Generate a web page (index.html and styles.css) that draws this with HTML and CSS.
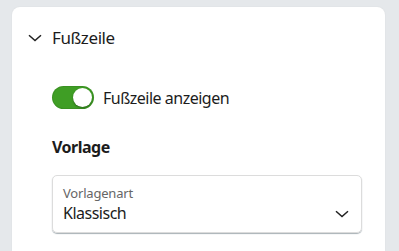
FILE: index.html
```html
<!DOCTYPE html>
<html lang="de">
<head>
<meta charset="utf-8">
<link rel="stylesheet" href="styles.css">
</head>
<body>
<div class="card">
  <div class="header">
    <svg class="chev" width="14" height="8" viewBox="0 0 14 8"><path d="M1 1.2 L7 6.6 L13 1.2" fill="none" stroke="#222" stroke-width="1.5"/></svg>
    <span class="title">Fußzeile</span>
  </div>
  <div class="content">
    <label class="toggle-row">
      <span class="toggle"><span class="knob"></span></span>
      <span class="toggle-label">Fußzeile anzeigen</span>
    </label>
    <div class="section-title">Vorlage</div>
    <div class="select">
      <div class="select-text">
        <span class="select-label">Vorlagenart</span>
        <span class="select-value">Klassisch</span>
      </div>
      <svg class="select-chev" width="14" height="8" viewBox="0 0 14 8"><path d="M1 1.2 L7 6.6 L13 1.2" fill="none" stroke="#222" stroke-width="1.5"/></svg>
    </div>
  </div>
</div>
</body>
</html>
```
FILE: styles.css
```css
html, body {
  margin: 0;
  padding: 0;
  background: #e5e8eb;
  font-family: "Noto Sans", "Open Sans", sans-serif;
  color: #1c1c1c;
  overflow: hidden;
  height: 251px;
}
.card {
  margin: 7px 0 0 12px;
  width: 373px;
  height: 244px;
  background: #fff;
  border-radius: 8px 8px 0 0;
  box-shadow: 0 0 2px rgba(0,0,0,0.06);
}
.header {
  display: flex;
  align-items: center;
  height: 20px;
  padding: 21px 0 0 16px;
  gap: 10px;
}
.chev {
  display: block;
}
.title {
  font-size: 17px;
  letter-spacing: -0.4px;
  line-height: 20px;
}
.content {
  padding: 0 0 0 40px;
}
.toggle-row {
  display: flex;
  align-items: center;
  gap: 9px;
  margin-top: 38px;
  height: 23px;
}
.toggle {
  position: relative;
  width: 42px;
  height: 23px;
  border-radius: 12px;
  background: #3f9e25;
  box-shadow: inset 0 0 0 1px rgba(0,0,0,0.08);
}
.knob {
  position: absolute;
  right: 2px;
  top: 2px;
  width: 19px;
  height: 19px;
  border-radius: 50%;
  background: #fff;
  box-shadow: 0 1px 2px rgba(0,0,0,0.35);
}
.toggle-label {
  font-size: 16px;
  letter-spacing: -0.5px;
  line-height: 20px;
}
.section-title {
  font-size: 16px;
  letter-spacing: -0.5px;
  font-weight: 700;
  line-height: 20px;
  margin-top: 28px;
}
.select {
  margin-top: 18px;
  width: 310px;
  height: 58px;
  box-sizing: border-box;
  border: 1px solid #dcdcdc;
  border-radius: 5px;
  box-shadow: 0 1px 1px rgba(60,80,90,0.45);
  display: flex;
  align-items: flex-end;
  justify-content: space-between;
  padding: 0 12px 0 10px;
}
.select-text {
  display: flex;
  flex-direction: column;
  padding-bottom: 8px;
}
.select-label {
  font-size: 13px;
  letter-spacing: -0.2px;
  line-height: 18px;
  color: #666;
}
.select-value {
  font-size: 16px;
  letter-spacing: -0.5px;
  line-height: 22px;
  color: #1c1c1c;
}
.select-chev {
  display: block;
  margin-bottom: 14px;
}
```
